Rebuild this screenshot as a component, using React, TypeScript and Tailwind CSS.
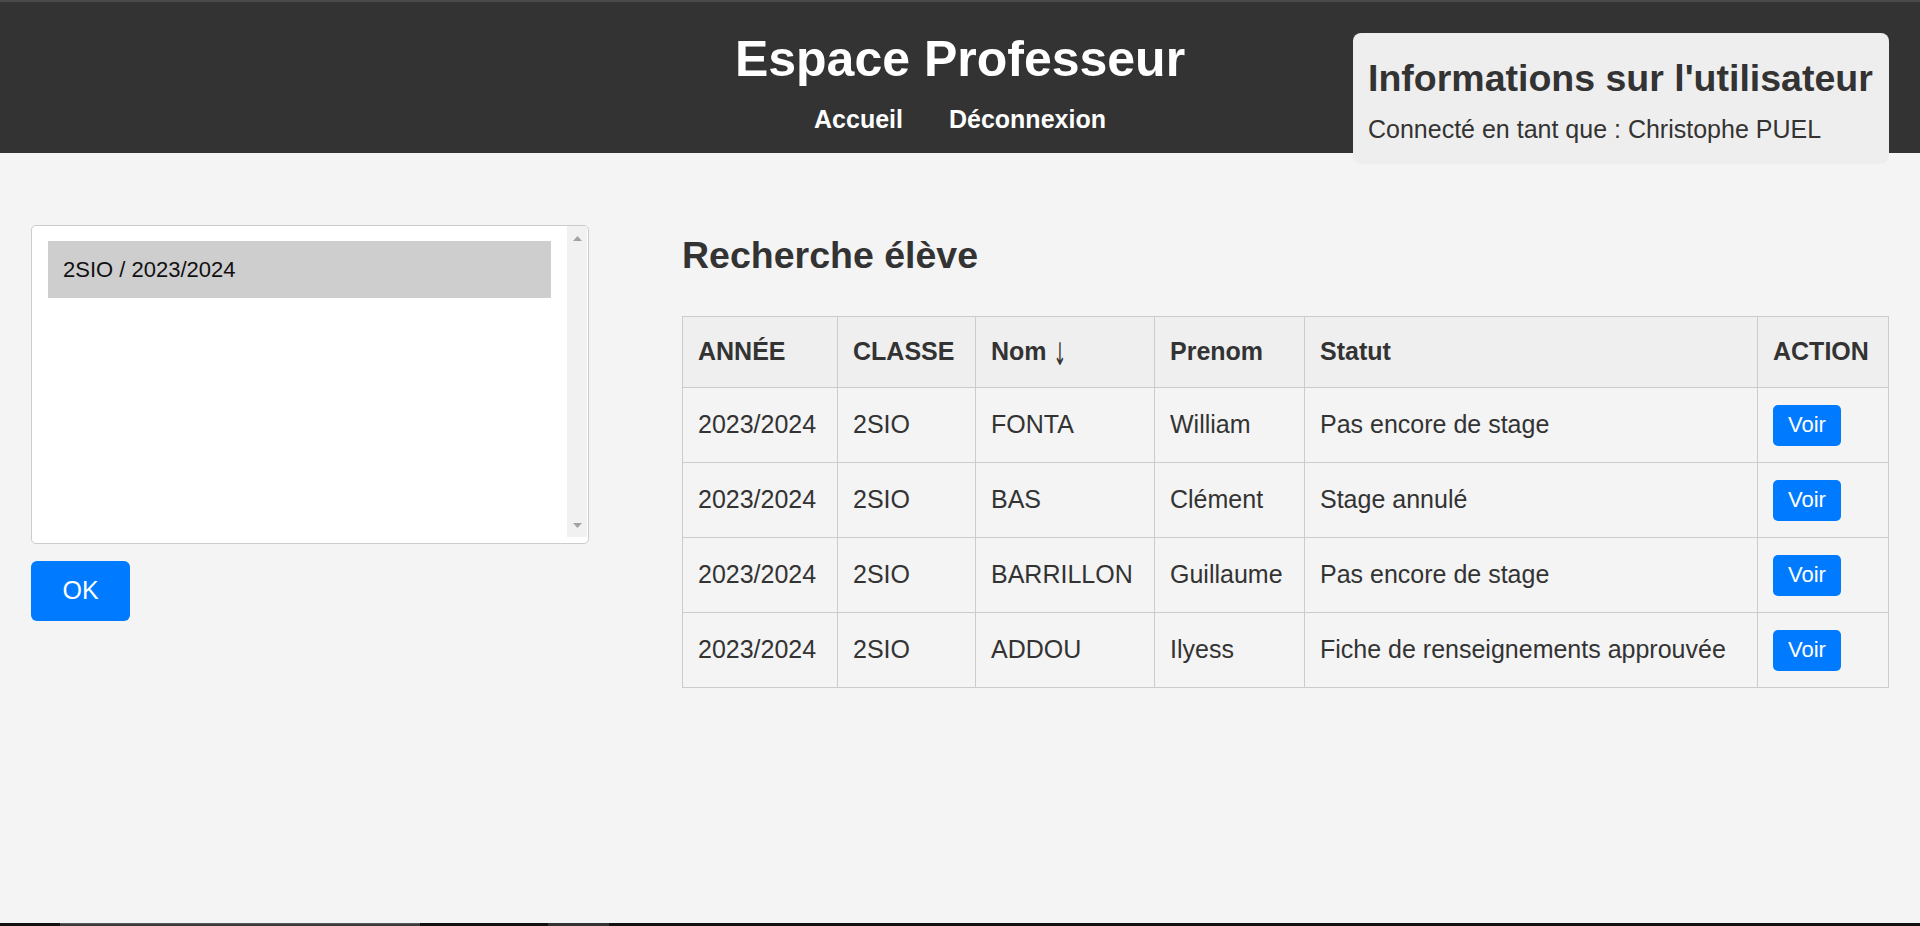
const eleves = [
  { annee: "2023/2024", classe: "2SIO", nom: "FONTA", prenom: "William", statut: "Pas encore de stage" },
  { annee: "2023/2024", classe: "2SIO", nom: "BAS", prenom: "Clément", statut: "Stage annulé" },
  { annee: "2023/2024", classe: "2SIO", nom: "BARRILLON", prenom: "Guillaume", statut: "Pas encore de stage" },
  { annee: "2023/2024", classe: "2SIO", nom: "ADDOU", prenom: "Ilyess", statut: "Fiche de renseignements approuvée" },
];

const colonnes = ["ANNÉE", "CLASSE", "Nom", "Prenom", "Statut", "ACTION"];

export default function App() {
  return (
    <div className="flex h-screen flex-col overflow-hidden bg-[#f4f4f4] font-['Liberation_Sans',Arial,sans-serif] text-[#333]">
      <header className="relative h-[153px] shrink-0 border-t-2 border-[#4a4a4a] bg-[#333] text-white">
        <h1 className="pt-[28px] text-center text-[50px] font-bold leading-[58px]">Espace Professeur</h1>
        <nav className="mt-[17px] flex justify-center gap-[46px] text-[25px] font-bold leading-[29px]">
          <a href="#">Accueil</a>
          <a href="#">Déconnexion</a>
        </nav>

        {/* carte utilisateur, déborde sous le header */}
        <div className="absolute right-[31px] top-[31px] h-[131px] w-[536px] rounded-[8px] bg-[#eeeeee] px-[15px] text-[#333]">
          <h2 className="mt-[24px] text-[37.5px] font-bold leading-[43px]">Informations sur l'utilisateur</h2>
          <p className="mt-[15px] text-[25px] leading-[29px]">Connecté en tant que : Christophe PUEL</p>
        </div>
      </header>

      <main className="flex flex-1 items-start gap-[93px] px-[31px] pt-[72px]">
        <div className="w-[558px] shrink-0">
          <div className="flex h-[319px] rounded-[5px] border border-[#cccccc] bg-white">
            <div className="flex-1 px-[16px] pt-[15px]">
              <div className="flex h-[57px] items-center bg-[#cecece] pl-[15px] text-[22px] text-[#111]">
                2SIO / 2023/2024
              </div>
            </div>
            <div className="mb-[6px] mr-[1px] flex w-[20px] flex-col items-center justify-between bg-[#f1f1f1] pb-[9px] pt-[10px]">
              <svg width="9" height="5" viewBox="0 0 9 5">
                <path d="M4.5 0 L9 5 L0 5 Z" fill="#a3a3a3" />
              </svg>
              <svg width="9" height="5" viewBox="0 0 9 5">
                <path d="M0 0 L9 0 L4.5 5 Z" fill="#a3a3a3" />
              </svg>
            </div>
          </div>
          <button className="mt-[17px] h-[60px] w-[99px] rounded-[6px] bg-[#007bff] text-[25px] text-white">OK</button>
        </div>

        <div className="w-[1207px]">
          <h2 className="mb-[39px] mt-[9px] text-[37.5px] font-bold leading-[43px]">Recherche élève</h2>
          <table className="w-full table-fixed border-collapse">
            <colgroup>
              <col className="w-[155px]" />
              <col className="w-[138px]" />
              <col className="w-[179px]" />
              <col className="w-[150px]" />
              <col className="w-[453px]" />
              <col className="w-[131px]" />
            </colgroup>
            <thead>
              <tr className="bg-[#efefef]">
                {colonnes.map((c) => (
                  <th key={c} className="border border-[#cccccc] px-[15px] py-0 text-left text-[25px] font-bold">
                    <div className="flex h-[70px] items-center">
                      {c}
                      {c === "Nom" && (
                        <span className="mt-[5px] font-['DejaVu_Sans',sans-serif] text-[31px] font-normal leading-none [transform:scaleX(0.5)]">
                          ↓
                        </span>
                      )}
                    </div>
                  </th>
                ))}
              </tr>
            </thead>
            <tbody>
              {eleves.map((e) => (
                <tr key={e.nom}>
                  <td className="border border-[#cccccc] px-[15px] py-0 text-[25px]">
                    <div className="flex h-[74px] items-center">{e.annee}</div>
                  </td>
                  <td className="border border-[#cccccc] px-[15px] py-0 text-[25px]">
                    <div className="flex h-[74px] items-center">{e.classe}</div>
                  </td>
                  <td className="border border-[#cccccc] px-[15px] py-0 text-[25px]">
                    <div className="flex h-[74px] items-center">{e.nom}</div>
                  </td>
                  <td className="border border-[#cccccc] px-[15px] py-0 text-[25px]">
                    <div className="flex h-[74px] items-center">{e.prenom}</div>
                  </td>
                  <td className="border border-[#cccccc] px-[15px] py-0 text-[25px]">
                    <div className="flex h-[74px] items-center">{e.statut}</div>
                  </td>
                  <td className="border border-[#cccccc] px-[15px] py-0">
                    <div className="flex h-[74px] items-center">
                      <button className="h-[41px] w-[68px] rounded-[5px] bg-[#007bff] text-[22px] leading-none text-white">Voir</button>
                    </div>
                  </td>
                </tr>
              ))}
            </tbody>
          </table>
        </div>
      </main>

      <div className="flex h-[3px] shrink-0 bg-[#111]">
        <div className="ml-[60px] w-[360px] border-t border-[#5a5a5a] bg-[#3a3a3a]" />
        <div className="ml-[128px] w-[61px] bg-[#333]" />
      </div>
    </div>
  );
}
